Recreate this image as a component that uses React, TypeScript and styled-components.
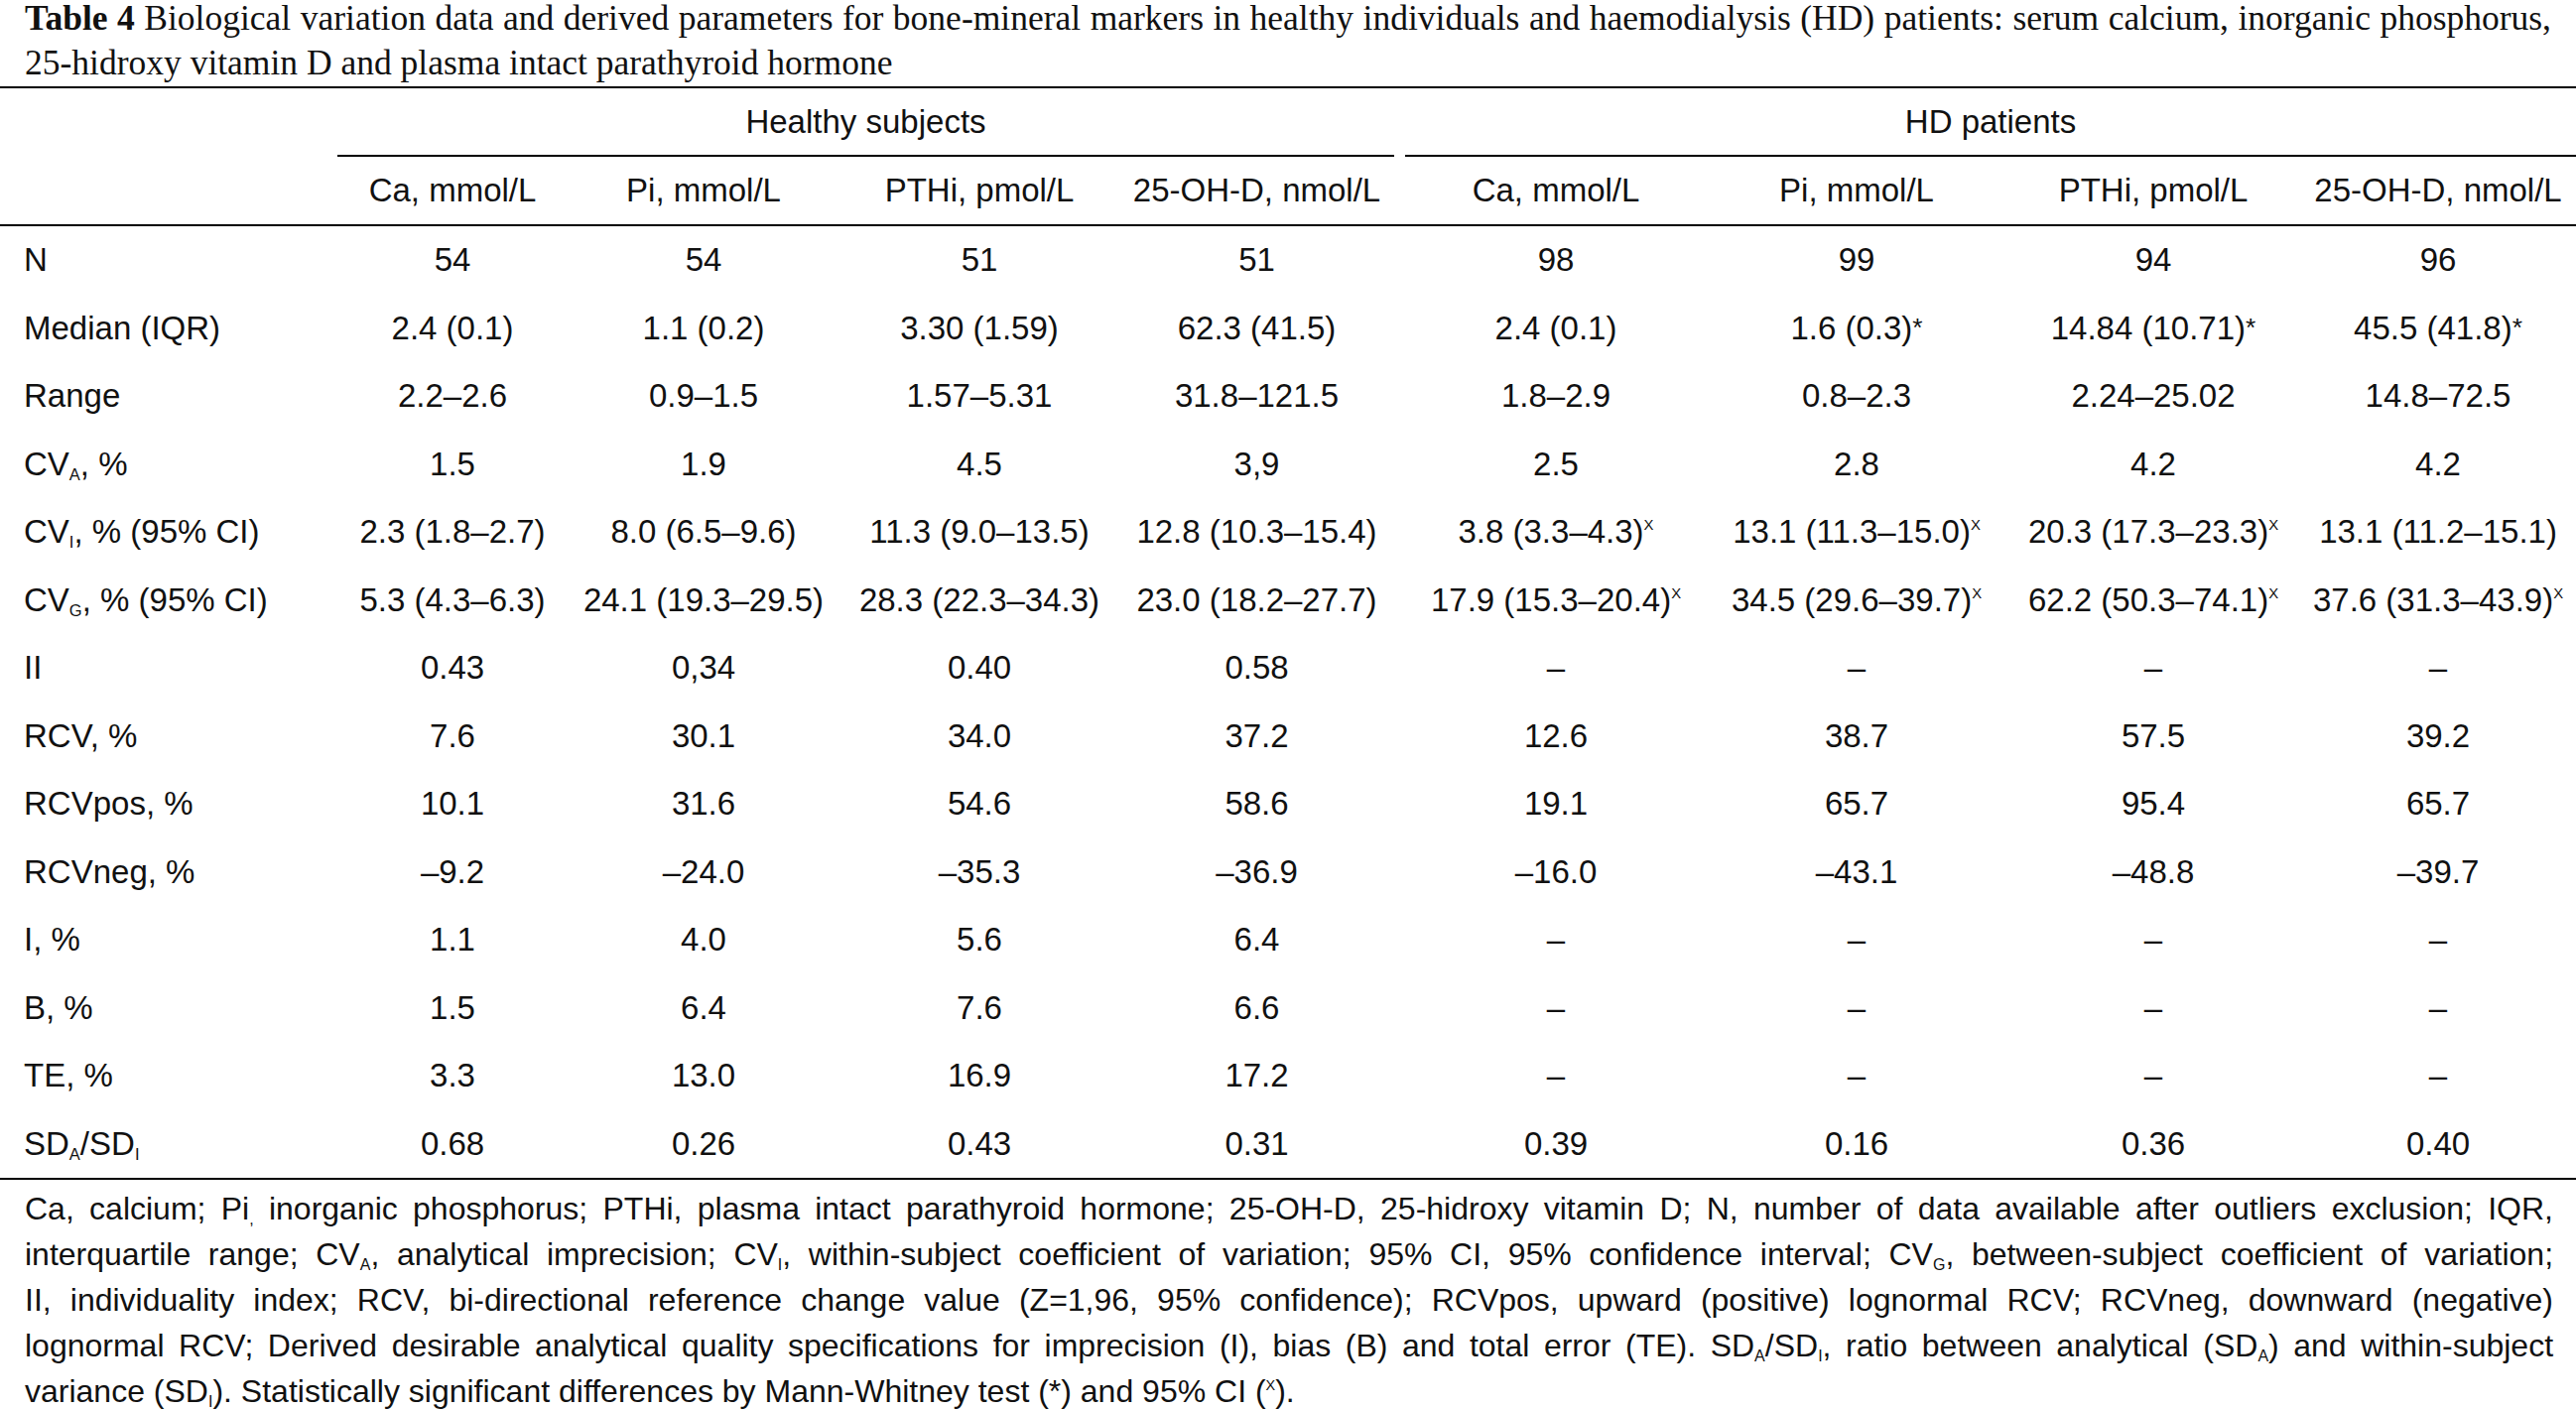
import React from "react";
import styled, { createGlobalStyle } from "styled-components";

const Global = createGlobalStyle`
  html, body { margin: 0; padding: 0; background: #ffffff; overflow: hidden; }
  body { color: #111111; font-family: "Liberation Sans", Arial, sans-serif; }
`;

const Page = styled.div`
  width: 2596px;
  display: flex;
  flex-direction: column;
`;

const Caption = styled.div`
  font-family: "Liberation Serif", "Times New Roman", serif;
  font-size: 35.5px;
  line-height: 45px;
  margin: -4px 0 1px;
  padding: 0 25px 0 25px;
  color: #111;
`;

const Line = styled.span<{ $justify?: boolean }>`
  display: block;
  white-space: nowrap;
  text-align: ${(p) => (p.$justify ? "justify" : "left")};
  text-align-last: ${(p) => (p.$justify ? "justify" : "left")};
`;

const Bold = styled.b`
  font-weight: 700;
`;

const Table = styled.table`
  width: 2596px;
  table-layout: fixed;
  border-collapse: separate;
  border-spacing: 0;
  font-family: "Liberation Sans", Arial, sans-serif;
  font-size: 33px;
  color: #111;
`;

const GroupCell = styled.th<{ $rule?: boolean }>`
  height: 67px;
  padding: 0;
  font-weight: 400;
  text-align: center;
  vertical-align: middle;
  border-top: 2px solid #000;
  border-bottom: 2px solid ${(p) => (p.$rule ? "#000" : "transparent")};
`;

const HeadCell = styled.th`
  height: 68px;
  padding: 0;
  font-weight: 400;
  text-align: center;
  vertical-align: middle;
  white-space: nowrap;
  border-bottom: 2px solid #000;
`;

const LabelCell = styled.td<{ $last?: boolean }>`
  height: 68.5px;
  padding: 0 0 0 24px;
  text-align: left;
  vertical-align: middle;
  white-space: nowrap;
  border-bottom: ${(p) => (p.$last ? "2px solid #000" : "0")};
`;

const DataCell = styled.td<{ $last?: boolean }>`
  height: 68.5px;
  padding: 0;
  text-align: center;
  vertical-align: middle;
  white-space: nowrap;
  border-bottom: ${(p) => (p.$last ? "2px solid #000" : "0")};
`;

const Sub = styled.sub`
  font-size: 0.5em;
  vertical-align: -0.3em;
  line-height: 0;
`;

const Sup = styled.sup<{ $star?: boolean }>`
  font-size: ${(p) => (p.$star ? "0.8em" : "0.45em")};
  vertical-align: ${(p) => (p.$star ? "0.12em" : "0.85em")};
  line-height: 0;
`;

const Notes = styled.div`
  font-family: "Liberation Sans", Arial, sans-serif;
  font-size: 32px;
  line-height: 46px;
  padding: 0 23px 0 25px;
  margin-top: 6px;
  color: #111;
`;

type Val = { v: string; m?: "*" | "X" };

const COLS = [340, 232, 274, 282, 277, 11, 304, 302, 296, 278];

const parse = (s: string): Val => {
  if (s.endsWith("*")) return { v: s.slice(0, -1), m: "*" };
  if (s.endsWith("^X")) return { v: s.slice(0, -2), m: "X" };
  return { v: s };
};

const rows: { label: React.ReactNode; vals: string[] }[] = [
  { label: "N", vals: ["54", "54", "51", "51", "98", "99", "94", "96"] },
  {
    label: "Median (IQR)",
    vals: ["2.4 (0.1)", "1.1 (0.2)", "3.30 (1.59)", "62.3 (41.5)", "2.4 (0.1)", "1.6 (0.3)*", "14.84 (10.71)*", "45.5 (41.8)*"],
  },
  {
    label: "Range",
    vals: ["2.2–2.6", "0.9–1.5", "1.57–5.31", "31.8–121.5", "1.8–2.9", "0.8–2.3", "2.24–25.02", "14.8–72.5"],
  },
  {
    label: (
      <>
        CV<Sub>A</Sub>, %
      </>
    ),
    vals: ["1.5", "1.9", "4.5", "3,9", "2.5", "2.8", "4.2", "4.2"],
  },
  {
    label: (
      <>
        CV<Sub>I</Sub>, % (95% CI)
      </>
    ),
    vals: [
      "2.3 (1.8–2.7)",
      "8.0 (6.5–9.6)",
      "11.3 (9.0–13.5)",
      "12.8 (10.3–15.4)",
      "3.8 (3.3–4.3)^X",
      "13.1 (11.3–15.0)^X",
      "20.3 (17.3–23.3)^X",
      "13.1 (11.2–15.1)",
    ],
  },
  {
    label: (
      <>
        CV<Sub>G</Sub>, % (95% CI)
      </>
    ),
    vals: [
      "5.3 (4.3–6.3)",
      "24.1 (19.3–29.5)",
      "28.3 (22.3–34.3)",
      "23.0 (18.2–27.7)",
      "17.9 (15.3–20.4)^X",
      "34.5 (29.6–39.7)^X",
      "62.2 (50.3–74.1)^X",
      "37.6 (31.3–43.9)^X",
    ],
  },
  { label: "II", vals: ["0.43", "0,34", "0.40", "0.58", "–", "–", "–", "–"] },
  { label: "RCV, %", vals: ["7.6", "30.1", "34.0", "37.2", "12.6", "38.7", "57.5", "39.2"] },
  { label: "RCVpos, %", vals: ["10.1", "31.6", "54.6", "58.6", "19.1", "65.7", "95.4", "65.7"] },
  { label: "RCVneg, %", vals: ["–9.2", "–24.0", "–35.3", "–36.9", "–16.0", "–43.1", "–48.8", "–39.7"] },
  { label: "I, %", vals: ["1.1", "4.0", "5.6", "6.4", "–", "–", "–", "–"] },
  { label: "B, %", vals: ["1.5", "6.4", "7.6", "6.6", "–", "–", "–", "–"] },
  { label: "TE, %", vals: ["3.3", "13.0", "16.9", "17.2", "–", "–", "–", "–"] },
  {
    label: (
      <>
        SD<Sub>A</Sub>/SD<Sub>I</Sub>
      </>
    ),
    vals: ["0.68", "0.26", "0.43", "0.31", "0.39", "0.16", "0.36", "0.40"],
  },
];

const units = ["Ca, mmol/L", "Pi, mmol/L", "PTHi, pmol/L", "25-OH-D, nmol/L"];

const Value: React.FC<{ s: string }> = ({ s }) => {
  const p = parse(s);
  return (
    <>
      {p.v}
      {p.m && <Sup $star={p.m === "*"}>{p.m}</Sup>}
    </>
  );
};

export default function App() {
  return (
    <Page>
      <Global />
      <Caption>
        <Line $justify>
          <Bold>Table 4</Bold> Biological variation data and derived parameters for bone-mineral markers in healthy
          individuals and haemodialysis (HD) patients: serum calcium, inorganic phosphorus,
        </Line>
        <Line>25-hidroxy vitamin D and plasma intact parathyroid hormone</Line>
      </Caption>

      <Table>
        <colgroup>
          {COLS.map((w, i) => (
            <col key={i} style={{ width: w }} />
          ))}
        </colgroup>
        <thead>
          <tr>
            <GroupCell />
            <GroupCell colSpan={4} $rule>
              Healthy subjects
            </GroupCell>
            <GroupCell />
            <GroupCell colSpan={4} $rule>
              HD patients
            </GroupCell>
          </tr>
          <tr>
            <HeadCell />
            {units.map((u) => (
              <HeadCell key={"h" + u}>{u}</HeadCell>
            ))}
            <HeadCell />
            {units.map((u) => (
              <HeadCell key={"d" + u}>{u}</HeadCell>
            ))}
          </tr>
        </thead>
        <tbody>
          {rows.map((r, ri) => {
            const last = ri === rows.length - 1;
            return (
              <tr key={ri}>
                <LabelCell $last={last}>{r.label}</LabelCell>
                {r.vals.slice(0, 4).map((s, i) => (
                  <DataCell key={"a" + i} $last={last}>
                    <Value s={s} />
                  </DataCell>
                ))}
                <DataCell $last={last} />
                {r.vals.slice(4).map((s, i) => (
                  <DataCell key={"b" + i} $last={last}>
                    <Value s={s} />
                  </DataCell>
                ))}
              </tr>
            );
          })}
        </tbody>
      </Table>

      <Notes>
        <Line $justify>
          Ca, calcium; Pi<Sub>,</Sub> inorganic phosphorus; PTHi, plasma intact parathyroid hormone; 25-OH-D,
          25-hidroxy vitamin D; N, number of data available after outliers exclusion; IQR,
        </Line>
        <Line $justify>
          interquartile range; CV<Sub>A</Sub>, analytical imprecision; CV<Sub>I</Sub>, within-subject coefficient of
          variation; 95% CI, 95% confidence interval; CV<Sub>G</Sub>, between-subject coefficient of variation;
        </Line>
        <Line $justify>
          II, individuality index; RCV, bi-directional reference change value (Z=1,96, 95% confidence); RCVpos, upward
          (positive) lognormal RCV; RCVneg, downward (negative)
        </Line>
        <Line $justify>
          lognormal RCV; Derived desirable analytical quality specifications for imprecision (I), bias (B) and total
          error (TE). SD<Sub>A</Sub>/SD<Sub>I</Sub>, ratio between analytical (SD<Sub>A</Sub>) and within-subject
        </Line>
        <Line>
          variance (SD<Sub>I</Sub>). Statistically significant differences by Mann-Whitney test (*) and 95% CI (
          <Sup>X</Sup>).
        </Line>
      </Notes>
    </Page>
  );
}
